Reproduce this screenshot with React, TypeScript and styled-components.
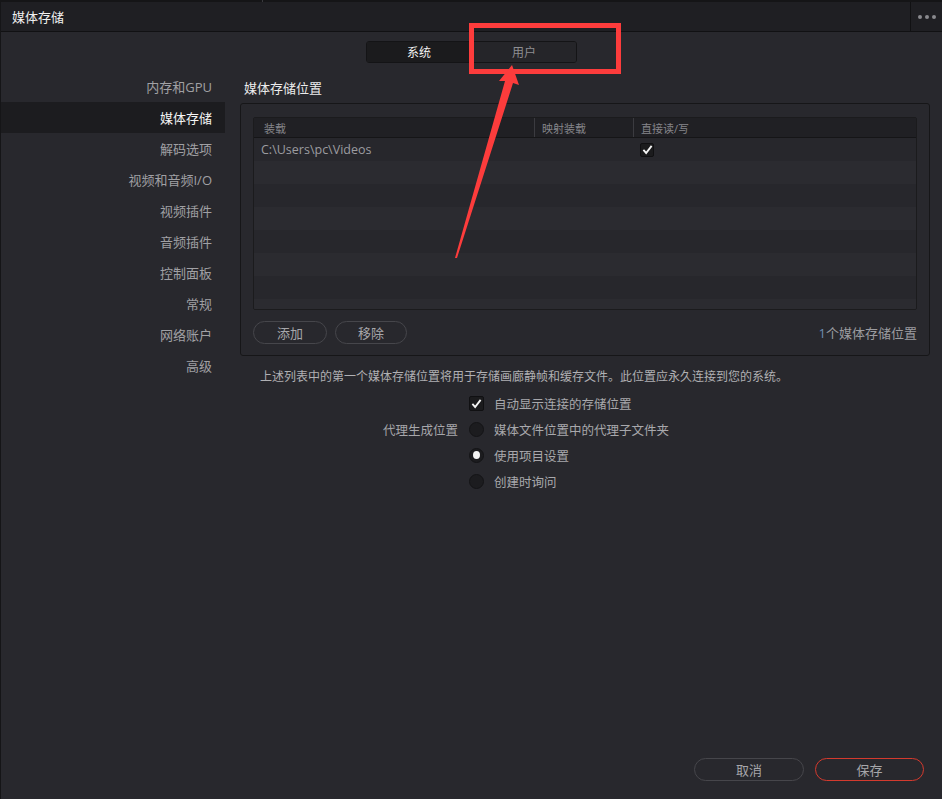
import { FC, ReactElement } from "react";
import styled, { createGlobalStyle } from "styled-components";

const GlobalStyle = createGlobalStyle`
    html, body {
        margin: 0;
        padding: 0;
        background: #28282d;
    }
    * { box-sizing: border-box; }
`;

const FONT = `"Open Sans", "Noto Sans CJK SC", sans-serif`;

const Page = styled.div`
    position: relative;
    width: 942px;
    height: 799px;
    overflow: hidden;
    display: flex;
    flex-direction: column;
    background: #28282d;
    border-left: 1px solid #151517;
    font-family: ${FONT};
    font-size: 13px;
    color: #a3a3a6;
`;

const TopStrip = styled.div`
    height: 2px;
    background: #151517;
    display: flex;
    .part { width: 262px; border-right: 1px solid #3a3a3e; }
`;

const TitleBar = styled.header`
    height: 30px;
    display: flex;
    align-items: center;
    background: #1f1f23;
    border-bottom: 1px solid #111113;
    .title {
        flex: 1;
        padding-left: 11px;
        color: #f0f0f0;
        font-size: 13px;
    }
    .more {
        width: 32px;
        height: 100%;
        border-left: 1px solid #111113;
        display: flex;
        align-items: center;
        justify-content: center;
        gap: 3px;
    }
    .dot {
        width: 4px;
        height: 4px;
        border-radius: 50%;
        background: #8a8a8e;
    }
`;

const TabRow = styled.div`
    display: flex;
    justify-content: center;
    padding: 9px 0 8px 0;
`;

const Tabs = styled.div`
    display: flex;
    width: 211px;
    height: 22px;
    border: 1px solid #141416;
    border-radius: 3px;
    overflow: hidden;
`;

const Tab = styled.div<{ $active?: boolean }>`
    flex: 1;
    display: flex;
    align-items: center;
    justify-content: center;
    font-size: 12px;
    background: ${(p) => (p.$active ? "#1b1b1d" : "#252529")};
    color: ${(p) => (p.$active ? "#f2f2f2" : "#8e8e92")};
    & + & { border-left: 1px solid #141416; }
`;

const Body = styled.div`
    flex: 1;
    display: grid;
    grid-template-columns: 224px 1fr;
    gap: 15px;
`;

const Sidebar = styled.nav`
    display: flex;
    flex-direction: column;
`;

const NavItem = styled.div<{ $active?: boolean }>`
    height: 31px;
    display: flex;
    align-items: center;
    justify-content: flex-end;
    padding-right: 13px;
    font-size: 13px;
    background: ${(p) => (p.$active ? "#1c1c1f" : "transparent")};
    color: ${(p) => (p.$active ? "#f5f5f5" : "#a0a0a4")};
`;

const Main = styled.section`
    display: flex;
    flex-direction: column;
    padding-right: 12px;
`;

const Heading = styled.h2`
    margin: 0;
    height: 32px;
    display: flex;
    align-items: center;
    padding-left: 4px;
    font-size: 13px;
    font-weight: normal;
    color: #ececec;
`;

const Panel = styled.div`
    height: 253px;
    border: 1px solid #161618;
    border-radius: 3px;
    padding: 13px 12px 11px 12px;
    display: flex;
    flex-direction: column;
`;

const Table = styled.div`
    height: 193px;
    border: 1px solid #1b1b1d;
    border-radius: 2px;
    overflow: hidden;
    display: flex;
    flex-direction: column;
`;

const HeadRow = styled.div`
    display: grid;
    grid-template-columns: 280px 99px 1fr;
    height: 20px;
    background: #202024;
    border-bottom: 1px solid #151517;
    flex-shrink: 0;
`;

const HeadCell = styled.div`
    display: flex;
    align-items: center;
    padding-left: 7px;
    font-size: 11px;
    color: #85858a;
    & + & { border-left: 1px solid #3b3b40; }
    &:first-child { padding-left: 10px; }
`;

const Row = styled.div<{ $even?: boolean }>`
    display: grid;
    grid-template-columns: 280px 99px 1fr;
    height: 23px;
    flex-shrink: 0;
    background: ${(p) => (p.$even ? "#2b2b30" : "#27272c")};
`;

const Cell = styled.div`
    display: flex;
    align-items: center;
    padding-left: 7px;
    font-size: 12.5px;
    color: #9c9ca0;
`;

const CheckBox = styled.span<{ $size?: number }>`
    width: ${(p) => p.$size ?? 14}px;
    height: ${(p) => p.$size ?? 14}px;
    border: 1px solid #101012;
    border-radius: 2px;
    background: #1b1b1d;
    display: inline-flex;
    align-items: center;
    justify-content: center;
    flex-shrink: 0;
`;

const Radio = styled.span<{ $on?: boolean }>`
    width: 15px;
    height: 15px;
    border-radius: 50%;
    background: #1c1c1f;
    border: 1px solid #141416;
    display: inline-flex;
    align-items: center;
    justify-content: center;
    flex-shrink: 0;
    &::after {
        content: "";
        width: 7px;
        height: 8px;
        border-radius: 50%;
        background: ${(p) => (p.$on ? "#f4f4f4" : "transparent")};
    }
`;

const PanelFooter = styled.div`
    margin-top: 11px;
    display: flex;
    align-items: center;
    gap: 8px;
    .count {
        margin-left: auto;
        font-size: 13px;
        color: #9c9ca0;
    }
    .num { color: #6d8db4; }
`;

const Pill = styled.button<{ $width: number; $danger?: boolean }>`
    width: ${(p) => p.$width}px;
    height: 23px;
    border-radius: 12px;
    border: 1px solid ${(p) => (p.$danger ? "#d43a2e" : "#46464b")};
    background: transparent;
    color: #a6a6aa;
    font-family: ${FONT};
    font-size: 13px;
    padding: 0;
    display: flex;
    align-items: center;
    justify-content: center;
`;

const Note = styled.p`
    margin: 11px 0 0 0;
    padding-left: 20px;
    font-size: 12px;
    color: #b0b0b3;
`;

const Options = styled.div`
    margin-top: 9px;
    display: grid;
    grid-template-columns: 218px auto;
    grid-auto-rows: 18px;
    row-gap: 8px;
    column-gap: 11px;
    align-items: center;
`;

const OptLabel = styled.div`
    text-align: right;
    font-size: 12.5px;
    color: #a6a6aa;
`;

const Choice = styled.div`
    display: flex;
    align-items: center;
    gap: 10px;
    font-size: 12.5px;
    color: #a8a8ac;
`;

const Footer = styled.footer`
    display: flex;
    justify-content: flex-end;
    gap: 11px;
    padding: 0 18px 18px 0;
`;

const Overlay = styled.svg`
    position: absolute;
    left: 0;
    top: 0;
    pointer-events: none;
`;

const Check: FC<{ size?: number }> = ({ size = 11 }): ReactElement => (
    <svg width={size} height={size} viewBox="0 0 12 12">
        <path d="M1.5 6.5 L4.5 9.8 L10.5 2" fill="none" stroke="#f4f4f4" strokeWidth="2" />
    </svg>
);

const navItems = ["内存和GPU", "媒体存储", "解码选项", "视频和音频I/O", "视频插件", "音频插件", "控制面板", "常规", "网络账户", "高级"];

const App: FC = (): ReactElement => {
    return (
        <Page>
            <GlobalStyle />
            <TopStrip><div className="part" /></TopStrip>
            <TitleBar>
                <div className="title">媒体存储</div>
                <div className="more">
                    <span className="dot" /><span className="dot" /><span className="dot" />
                </div>
            </TitleBar>
            <TabRow>
                <Tabs>
                    <Tab $active>系统</Tab>
                    <Tab>用户</Tab>
                </Tabs>
            </TabRow>
            <Body>
                <Sidebar>
                    {navItems.map((n) => (
                        <NavItem key={n} $active={n === "媒体存储"}>{n}</NavItem>
                    ))}
                </Sidebar>
                <Main>
                    <Heading>媒体存储位置</Heading>
                    <Panel>
                        <Table>
                            <HeadRow>
                                <HeadCell>装载</HeadCell>
                                <HeadCell>映射装载</HeadCell>
                                <HeadCell>直接读/写</HeadCell>
                            </HeadRow>
                            {Array.from({ length: 8 }).map((_, i) => (
                                <Row key={i} $even={i % 2 === 1}>
                                    <Cell>{i === 0 ? "C:\\Users\\pc\\Videos" : ""}</Cell>
                                    <Cell />
                                    <Cell>{i === 0 && <CheckBox><Check /></CheckBox>}</Cell>
                                </Row>
                            ))}
                        </Table>
                        <PanelFooter>
                            <Pill $width={74}>添加</Pill>
                            <Pill $width={72}>移除</Pill>
                            <span className="count"><span className="num">1</span>个媒体存储位置</span>
                        </PanelFooter>
                    </Panel>
                    <Note>上述列表中的第一个媒体存储位置将用于存储画廊静帧和缓存文件。此位置应永久连接到您的系统。</Note>
                    <Options>
                        <span />
                        <Choice><CheckBox $size={15}><Check /></CheckBox>自动显示连接的存储位置</Choice>
                        <OptLabel>代理生成位置</OptLabel>
                        <Choice><Radio />媒体文件位置中的代理子文件夹</Choice>
                        <span />
                        <Choice><Radio $on />使用项目设置</Choice>
                        <span />
                        <Choice><Radio />创建时询问</Choice>
                    </Options>
                </Main>
            </Body>
            <Footer>
                <Pill $width={110}>取消</Pill>
                <Pill $width={109} $danger>保存</Pill>
            </Footer>
            <Overlay width={942} height={799}>
                <rect x={470.5} y={25.5} width={147} height={46} fill="none" stroke="#fd3c3c" strokeWidth={5} />
                <polygon points="511,65 518,85 512,83 456,258 454,258 504,81 498,81" fill="#fd3c3c" />
            </Overlay>
        </Page>
    );
};

export default App;
